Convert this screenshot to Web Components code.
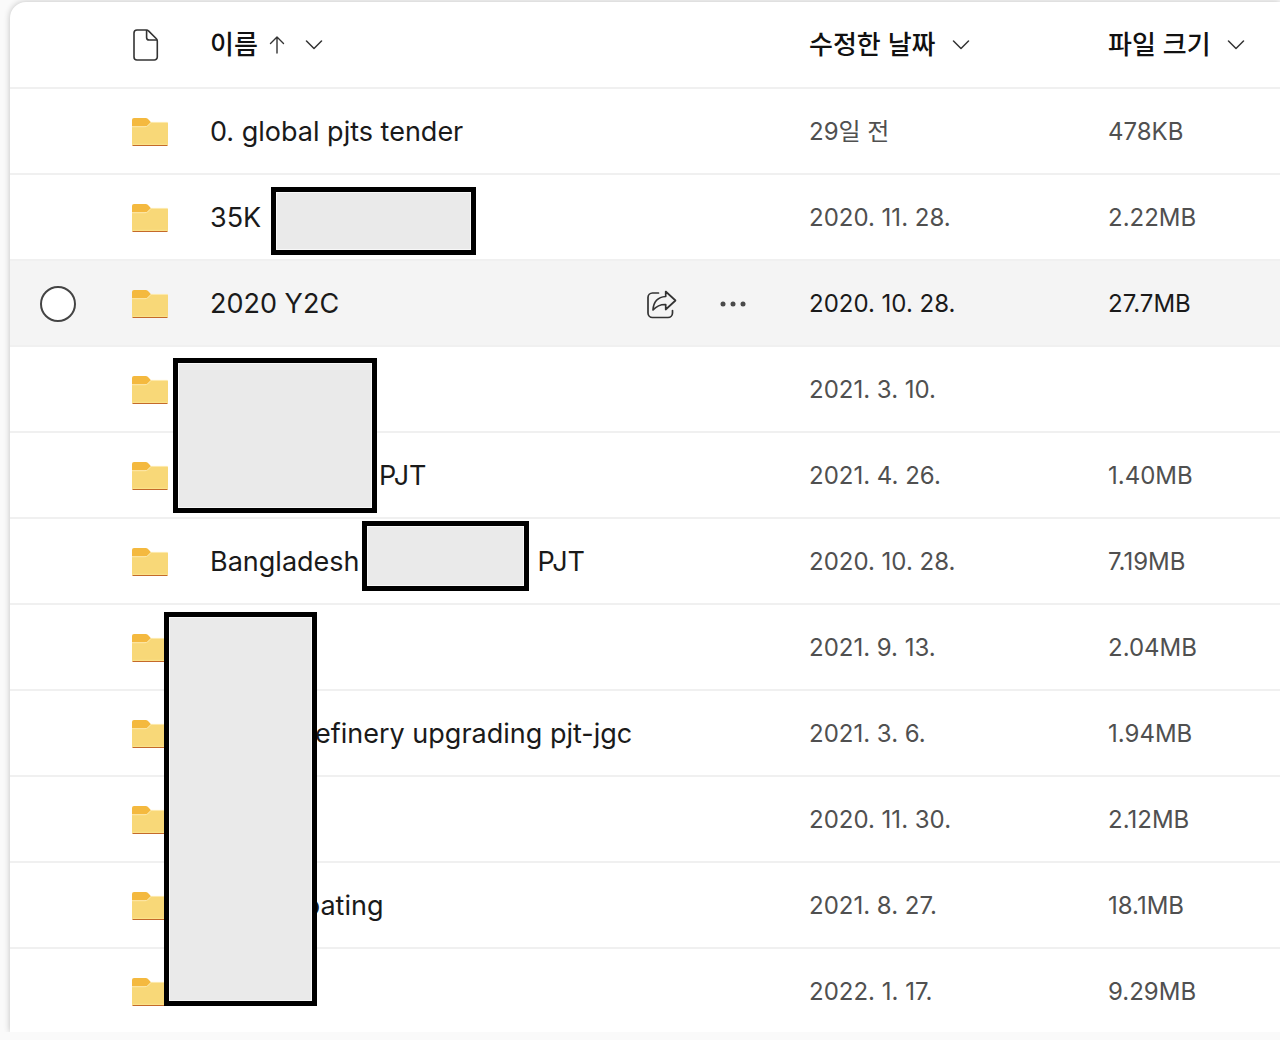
<!DOCTYPE html>
<html lang="ko">
<head>
	<meta charset="UTF-8" />
	<meta name="viewport" content="width=device-width, initial-scale=1.0" />
	<title>파일</title>
	<style>
		body {
			margin: 0;
			background: #fafafa;
			color: #1a1a1a;
			font-family: Inter, 'Noto Sans CJK KR', sans-serif;
		}
	</style>
</head>
<body>
	<file-panel>
		<file-table></file-table>
		<mask-box slot="cover" style="--x: 261px; --y: 185px; --w: 205px; --h: 68px"></mask-box>
		<mask-box slot="cover" style="--x: 163px; --y: 356px; --w: 204px; --h: 155px"></mask-box>
		<mask-box slot="cover" style="--x: 352px; --y: 519px; --w: 167px; --h: 70px"></mask-box>
		<mask-box slot="cover" style="--x: 154px; --y: 610px; --w: 153px; --h: 394px"></mask-box>
	</file-panel>

	<script>
		const icons = {
			file: `
				<svg width="26" height="32" viewBox="0 0 26 32" fill="none" stroke="#333" stroke-width="1.6">
					<path d="M4 1h9.4c.8 0 1.6.3 2.1.9l7.9 7.9c.6.6.9 1.3.9 2.1V28a3 3 0 0 1-3 3H4a3 3 0 0 1-3-3V4a3 3 0 0 1 3-3z" />
					<path d="M13.6 1v7.4a2.6 2.6 0 0 0 2.6 2.6h7.8" />
				</svg>`,
			folder: `
				<svg width="36" height="28" viewBox="0 0 36 28">
					<path fill="#f4b93f" d="M0 2a2 2 0 0 1 2-2h11.6c1 0 1.8.4 2.4 1l3 3.2V14H0z" />
					<path fill="#f8d878" d="M0 8.5h13c1.2 0 2-.3 2.8-1.1L18.6 4.6c.5-.4.9-.6 1.500-.6h14.400a1.500 1.500 0 0 1 1.500 1.500v21a1.500 1.500 0 0 1-1.500 1.500h-33A1.500 1.500 0 0 1 0 26.500z" />
					<path fill="none" stroke="#fdebb0" d="M0 8.700h13c1.200 0 2-.3 2.800-1.100l2.800-2.700c.5-.4.9-.5 1.500-.5H35.500" />
					<path fill="none" stroke="#fbe58d" d="M.5 26.300h35" />
					<path fill="none" stroke="#c4692a" stroke-linecap="round" d="M1 27.500h34" />
				</svg>`,
			up: `
				<svg width="16" height="18" viewBox="0 0 16 18" fill="none" stroke="#333" stroke-width="1.4" stroke-linecap="round" stroke-linejoin="round">
					<path d="M8 17V1M1.5 7.4 8 1l6.5 6.4" />
				</svg>`,
			chevron: `
				<svg width="18" height="10" viewBox="0 0 18 10" fill="none" stroke="#333" stroke-width="1.5" stroke-linecap="round" stroke-linejoin="round">
					<path d="M1.5 1 9 8.5 16.5 1" />
				</svg>`,
			share: `
				<svg width="31" height="29" viewBox="0 0 31 29" fill="none" stroke="#333" stroke-width="1.7" stroke-linecap="round" stroke-linejoin="round">
					<path d="M12.5 3h-6A4.500 4.500 0 0 0 2 7.500v15.500a4.500 4.500 0 0 0 4.500 4.500h15.500a4.500 4.500 0 0 0 4.500-4.500v-2.500" />
					<path d="M19.7 1.500l9.800 9-9.800 9v-5C14.500 14.300 10.700 16 7 20 7.500 11.500 12 7 19.700 6.500z" />
				</svg>`,
			more: `
				<svg width="28" height="6" viewBox="0 0 28 6" fill="#4a4a4a">
					<circle cx="4" cy="3" r="2.5" />
					<circle cx="14" cy="3" r="2.5" />
					<circle cx="24" cy="3" r="2.5" />
				</svg>`,
		}

		// gap: width in px of the part of the name that is covered
		const files = [
			{ name: ['0. global pjts tender'], date: '29일 전', size: '478KB' },
			{ name: ['35K'], date: '2020. 11. 28.', size: '2.22MB' },
			{ name: ['2020 Y2C'], date: '2020. 10. 28.', size: '27.7MB', active: true },
			{ name: [], date: '2021. 3. 10.', size: '' },
			{ name: [{ gap: 169 }, 'PJT'], date: '2021. 4. 26.', size: '1.40MB' },
			{ name: ['Bangladesh', { gap: 178 }, 'PJT'], date: '2020. 10. 28.', size: '7.19MB' },
			{ name: [], date: '2021. 9. 13.', size: '2.04MB' },
			{ name: [{ gap: 105 }, 'efinery upgrading pjt-jgc'], date: '2021. 3. 6.', size: '1.94MB' },
			{ name: [], date: '2020. 11. 30.', size: '2.12MB' },
			{ name: [{ gap: 94 }, 'oating'], date: '2021. 8. 27.', size: '18.1MB' },
			{ name: [], date: '2022. 1. 17.', size: '9.29MB' },
		]

		class UiIcon extends HTMLElement {
			constructor() {
				super()

				const shadow = this.attachShadow({ mode: 'open' })

				shadow.innerHTML = `
				<style>
					:host {
						display: block;
						flex: none;
					}

					svg {
						display: block;
					}
				</style>
				<div></div>
				`
			}

			connectedCallback() {
				this.shadowRoot.querySelector('div').innerHTML = icons[this.getAttribute('name')]
			}
		}

		class MaskBox extends HTMLElement {
			constructor() {
				super()

				const shadow = this.attachShadow({ mode: 'open' })

				shadow.innerHTML = `
				<style>
					:host {
						position: absolute;
						left: var(--x);
						top: var(--y);
						width: var(--w);
						height: var(--h);
						box-sizing: border-box;
						border: 5px solid #000;
						background: #eaeaea;
						box-shadow: inset 0 0 0 1px #f8f8f8;
					}
				</style>
				`
			}
		}

		class FilePanel extends HTMLElement {
			constructor() {
				super()

				const shadow = this.attachShadow({ mode: 'open' })

				shadow.innerHTML = `
				<style>
					:host {
						display: block;
						padding: 2px 0 8px 10px;
						overflow: hidden;
					}

					.panel {
						position: relative;
						background: #fff;
						border-top-left-radius: 16px;
						box-shadow: 0 0 6px rgba(0, 0, 0, 0.24);
						clip-path: inset(-2px 0 0 -10px);
					}
				</style>
				<main class="panel">
					<slot></slot>
					<slot name="cover"></slot>
				</main>
				`
			}
		}

		class SortButton extends HTMLElement {
			constructor() {
				super()

				const shadow = this.attachShadow({ mode: 'open' })

				shadow.innerHTML = `
				<style>
					:host {
						display: block;
					}

					button {
						display: flex;
						align-items: center;
						gap: 16px;
						padding: 0;
						border: 0;
						background: none;
						color: inherit;
						font: inherit;
						white-space: nowrap;
						cursor: pointer;
					}

					.up {
						display: none;
					}

					:host([sorted]) .up {
						display: block;
						margin: 0 4px 0 -5px;
					}
				</style>
				<button type="button">
					<slot></slot>
					<ui-icon class="up" name="up"></ui-icon>
					<ui-icon name="chevron"></ui-icon>
				</button>
				`
			}
		}

		class FileName extends HTMLElement {
			constructor() {
				super()

				const shadow = this.attachShadow({ mode: 'open' })

				shadow.innerHTML = `
				<style>
					:host {
						display: flex;
						align-items: center;
					}

					a {
						display: flex;
						color: #1a1a1a;
						font-size: 27px;
						line-height: 36px;
						text-decoration: none;
						white-space: nowrap;
					}

					.actions {
						display: none;
						gap: 36px;
						margin-left: auto;
						margin-right: 58px;
					}

					:host([active]) .actions {
						display: flex;
					}

					button {
						display: grid;
						place-content: center;
						width: 36px;
						height: 36px;
						padding: 0;
						border: 0;
						background: none;
						cursor: pointer;
					}
				</style>
				<a href="#"></a>
				<div class="actions">
					<button type="button" aria-label="공유"><ui-icon name="share"></ui-icon></button>
					<button type="button" aria-label="추가 작업"><ui-icon name="more"></ui-icon></button>
				</div>
				`
			}

			set parts(parts) {
				const link = this.shadowRoot.querySelector('a')

				parts.forEach((part) => {
					const span = document.createElement('span')

					if (part.gap) {
						span.style.width = `${part.gap}px`
					} else {
						span.textContent = part
					}

					link.appendChild(span)
				})
			}
		}

		class FileTable extends HTMLElement {
			constructor() {
				super()

				const shadow = this.attachShadow({ mode: 'open' })

				shadow.innerHTML = `
				<style>
					:host {
						display: block;
					}

					table {
						width: 100%;
						table-layout: fixed;
						border-collapse: separate;
						border-spacing: 0;
					}

					.col-select {
						width: 122px;
					}

					.col-icon {
						width: 78px;
					}

					.col-date {
						width: 299px;
					}

					.col-size {
						width: 172px;
					}

					th,
					td {
						box-sizing: border-box;
						height: 86px;
						padding: 2px 0 0;
						border-bottom: 2px solid #f0f0f0;
						text-align: left;
						vertical-align: middle;
					}

					th {
						height: 87px;
						padding-top: 0;
						font-size: 26px;
						font-weight: 500;
						line-height: 36px;
						color: #111;
					}

					td {
						font-size: 24px;
						line-height: 36px;
						color: #505050;
						white-space: nowrap;
					}

					tbody tr:last-child td {
						height: 83px;
						border-bottom: 0;
					}

					.active td {
						background: #f4f4f4;
						color: #1a1a1a;
					}

					.type {
						display: block;
						padding: 0 0 0 1px;
						border: 0;
						background: none;
						cursor: pointer;
					}

					input {
						display: block;
						appearance: none;
						width: 36px;
						height: 36px;
						margin: 0 0 0 30px;
						border: 2px solid #444;
						border-radius: 50%;
						background: #fff;
						opacity: 0;
					}

					.active input {
						opacity: 1;
					}
				</style>
				<table>
					<colgroup>
						<col class="col-select" />
						<col class="col-icon" />
						<col />
						<col class="col-date" />
						<col class="col-size" />
					</colgroup>
					<thead>
						<tr>
							<th></th>
							<th><button class="type" type="button" aria-label="파일 형식"><ui-icon name="file"></ui-icon></button></th>
							<th><sort-button sorted>이름</sort-button></th>
							<th><sort-button>수정한 날짜</sort-button></th>
							<th><sort-button>파일 크기</sort-button></th>
						</tr>
					</thead>
					<tbody></tbody>
				</table>
				<template>
					<tr>
						<td><input type="checkbox" aria-label="선택" /></td>
						<td><ui-icon name="folder"></ui-icon></td>
						<td><file-name></file-name></td>
						<td class="date"></td>
						<td class="size"></td>
					</tr>
				</template>
				`

				const body = this.shadowRoot.querySelector('tbody')
				const template = this.shadowRoot.querySelector('template')

				files.forEach((file) => {
					const row = document.importNode(template.content, true).querySelector('tr')
					const name = row.querySelector('file-name')

					name.parts = file.name
					row.querySelector('.date').textContent = file.date
					row.querySelector('.size').textContent = file.size

					if (file.active) {
						row.classList.add('active')
						name.setAttribute('active', '')
					}

					body.appendChild(row)
				})
			}
		}

		customElements.define('ui-icon', UiIcon)
		customElements.define('mask-box', MaskBox)
		customElements.define('sort-button', SortButton)
		customElements.define('file-name', FileName)
		customElements.define('file-panel', FilePanel)
		customElements.define('file-table', FileTable)
	</script>
</body>
</html>
